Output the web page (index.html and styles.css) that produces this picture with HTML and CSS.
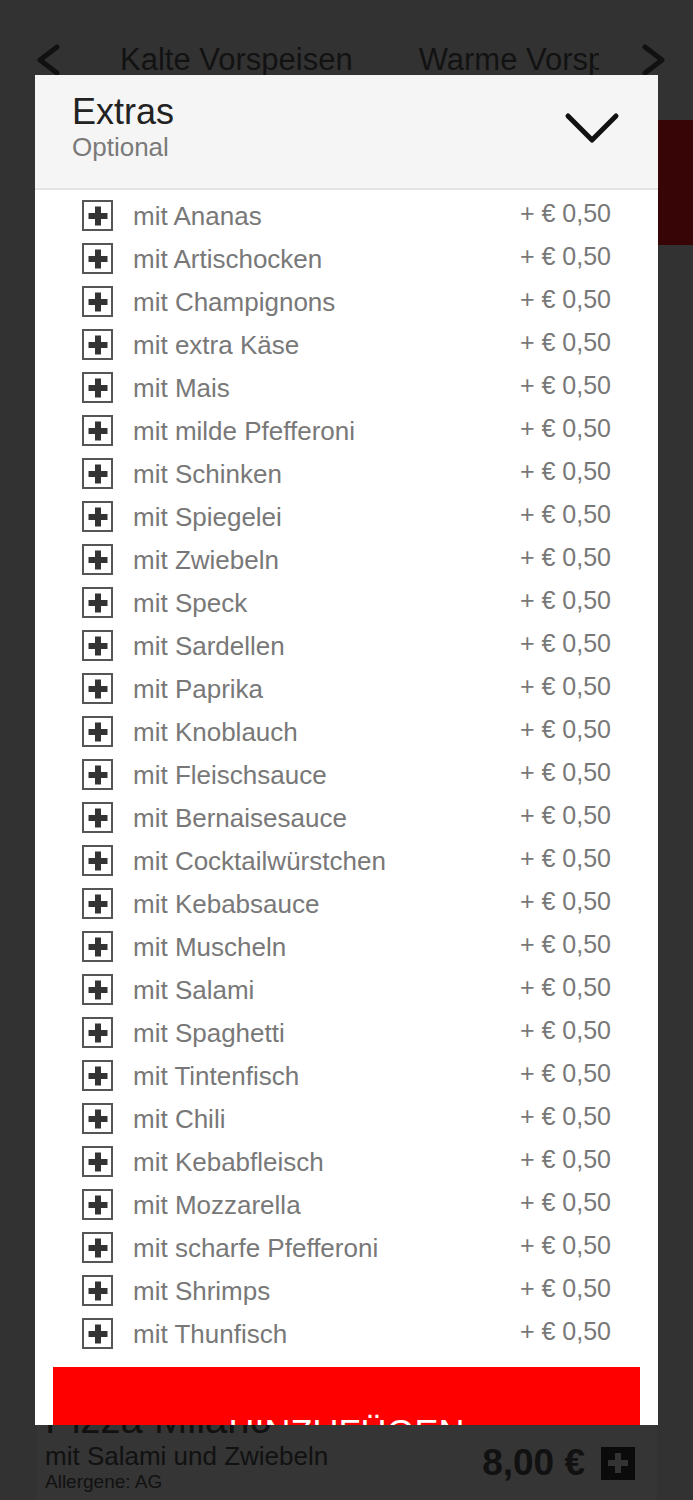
FILE: index.html
```html
<!DOCTYPE html>
<html>
  <head>
    <title>Extras</title>
    <link rel="stylesheet" href="styles.css">
  </head>
  <body>
    <div class="page">
      <div class="nav">
        <svg class="nav-arrow" width="26" height="32" viewBox="0 0 26 32"><polyline points="22,3 5,16 22,29" fill="none" stroke="#111" stroke-width="5" stroke-linecap="round" stroke-linejoin="round"/></svg>
        <div class="nav-items">
          <span class="nav-item">Kalte Vorspeisen</span>
          <span class="nav-item">Warme Vorspeisen</span>
        </div>
        <svg class="nav-arrow" width="26" height="32" viewBox="0 0 26 32"><polyline points="4,3 21,16 4,29" fill="none" stroke="#111" stroke-width="5" stroke-linecap="round" stroke-linejoin="round"/></svg>
      </div>
      <div class="banner"></div>
      <div class="dish">
        <div class="dish-title">Pizza Milano</div>
        <div class="dish-row">
          <div>
            <div class="dish-desc">mit Salami und Zwiebeln</div>
            <div class="dish-allergens">Allergene: AG</div>
          </div>
          <div class="dish-buy">
            <span class="dish-price">8,00 €</span>
            <span class="dish-add"></span>
          </div>
        </div>
      </div>
    </div>

    <div class="modal">
      <div class="modal-head">
        <div>
          <div class="modal-title">Extras</div>
          <div class="modal-sub">Optional</div>
        </div>
        <svg class="chevron" width="56" height="34" viewBox="0 0 56 34"><polyline points="4,4 28,28 52,4" fill="none" stroke="#111" stroke-width="5" stroke-linecap="round" stroke-linejoin="round"/></svg>
      </div>
      <div class="extras">
        <div class="extra"><span class="check"></span><span class="name">mit Ananas</span><span class="price">+ € 0,50</span></div>
        <div class="extra"><span class="check"></span><span class="name">mit Artischocken</span><span class="price">+ € 0,50</span></div>
        <div class="extra"><span class="check"></span><span class="name">mit Champignons</span><span class="price">+ € 0,50</span></div>
        <div class="extra"><span class="check"></span><span class="name">mit extra Käse</span><span class="price">+ € 0,50</span></div>
        <div class="extra"><span class="check"></span><span class="name">mit Mais</span><span class="price">+ € 0,50</span></div>
        <div class="extra"><span class="check"></span><span class="name">mit milde Pfefferoni</span><span class="price">+ € 0,50</span></div>
        <div class="extra"><span class="check"></span><span class="name">mit Schinken</span><span class="price">+ € 0,50</span></div>
        <div class="extra"><span class="check"></span><span class="name">mit Spiegelei</span><span class="price">+ € 0,50</span></div>
        <div class="extra"><span class="check"></span><span class="name">mit Zwiebeln</span><span class="price">+ € 0,50</span></div>
        <div class="extra"><span class="check"></span><span class="name">mit Speck</span><span class="price">+ € 0,50</span></div>
        <div class="extra"><span class="check"></span><span class="name">mit Sardellen</span><span class="price">+ € 0,50</span></div>
        <div class="extra"><span class="check"></span><span class="name">mit Paprika</span><span class="price">+ € 0,50</span></div>
        <div class="extra"><span class="check"></span><span class="name">mit Knoblauch</span><span class="price">+ € 0,50</span></div>
        <div class="extra"><span class="check"></span><span class="name">mit Fleischsauce</span><span class="price">+ € 0,50</span></div>
        <div class="extra"><span class="check"></span><span class="name">mit Bernaisesauce</span><span class="price">+ € 0,50</span></div>
        <div class="extra"><span class="check"></span><span class="name">mit Cocktailwürstchen</span><span class="price">+ € 0,50</span></div>
        <div class="extra"><span class="check"></span><span class="name">mit Kebabsauce</span><span class="price">+ € 0,50</span></div>
        <div class="extra"><span class="check"></span><span class="name">mit Muscheln</span><span class="price">+ € 0,50</span></div>
        <div class="extra"><span class="check"></span><span class="name">mit Salami</span><span class="price">+ € 0,50</span></div>
        <div class="extra"><span class="check"></span><span class="name">mit Spaghetti</span><span class="price">+ € 0,50</span></div>
        <div class="extra"><span class="check"></span><span class="name">mit Tintenfisch</span><span class="price">+ € 0,50</span></div>
        <div class="extra"><span class="check"></span><span class="name">mit Chili</span><span class="price">+ € 0,50</span></div>
        <div class="extra"><span class="check"></span><span class="name">mit Kebabfleisch</span><span class="price">+ € 0,50</span></div>
        <div class="extra"><span class="check"></span><span class="name">mit Mozzarella</span><span class="price">+ € 0,50</span></div>
        <div class="extra"><span class="check"></span><span class="name">mit scharfe Pfefferoni</span><span class="price">+ € 0,50</span></div>
        <div class="extra"><span class="check"></span><span class="name">mit Shrimps</span><span class="price">+ € 0,50</span></div>
        <div class="extra"><span class="check"></span><span class="name">mit Thunfisch</span><span class="price">+ € 0,50</span></div>
      </div>
      <div class="add-button">HINZUFÜGEN</div>
    </div>
  </body>
</html>
```

FILE: styles.css
```css
html,
body {
  margin: 0;
  height: 1500px;
  overflow: hidden;
}
body {
  background-color: #323232;
  font-family: "Liberation Sans", Arial, sans-serif;
  position: relative;
}
.page {
  display: flex;
  flex-direction: column;
  height: 1500px;
}
.nav {
  display: flex;
  align-items: flex-start;
  height: 78px;
  padding: 42px 26px 0 35px;
}
.nav-arrow {
  flex: none;
  margin-top: 2px;
}
.nav-items {
  flex: 1;
  display: flex;
  gap: 32px;
  margin: 0 42px;
  overflow: hidden;
  white-space: nowrap;
}
.nav-item {
  padding: 0 17px;
  font-size: 31px;
  line-height: 36px;
  color: #121212;
}
.banner {
  height: 125px;
  margin-left: 40px;
  background-color: #370505;
}
.dish {
  margin: auto 36px 0 37px;
  height: 103px;
  padding: 0 22px 0 8px;
  background-color: #353535;
  color: #111;
}
.dish-title {
  font-size: 40px;
  line-height: 44px;
}
.dish-row {
  display: flex;
  justify-content: space-between;
  align-items: center;
}
.dish-desc {
  font-size: 26px;
  line-height: 30px;
}
.dish-allergens {
  font-size: 19px;
  line-height: 22px;
}
.dish-buy {
  display: flex;
  align-items: center;
  gap: 16px;
  margin-bottom: 8px;
}
.dish-price {
  font-size: 37px;
  font-weight: bold;
}
.dish-add {
  position: relative;
  width: 34px;
  height: 33px;
  background-color: #0b0b0b;
}
.dish-add::before,
.dish-add::after {
  content: "";
  position: absolute;
  background-color: #333;
  left: 50%;
  top: 50%;
  transform: translate(-50%, -50%);
}
.dish-add::before {
  width: 20px;
  height: 6px;
}
.dish-add::after {
  width: 6px;
  height: 20px;
}

.modal {
  position: absolute;
  top: 75px;
  left: 35px;
  width: 623px;
  height: 1350px;
  overflow: hidden;
  background-color: #fff;
}
.modal-head {
  display: flex;
  justify-content: space-between;
  align-items: center;
  padding: 16px 38px 26px 37px;
  background-color: #f5f5f5;
  border-bottom: 2px solid #e4e4e4;
}
.modal-title {
  font-size: 36px;
  line-height: 41px;
  color: #222;
}
.modal-sub {
  font-size: 26px;
  line-height: 30px;
  color: #7a7a7a;
}
.chevron {
  margin-top: 4px;
}
.extras {
  padding: 4px 47px 0 47px;
}
.extra {
  display: flex;
  align-items: center;
  height: 43px;
  color: #787878;
}
.check {
  position: relative;
  flex: none;
  width: 27px;
  height: 27px;
  border: 2px solid #555;
}
.check::before,
.check::after {
  content: "";
  position: absolute;
  background-color: #333;
  left: 50%;
  top: 50%;
  transform: translate(-50%, -50%);
}
.check::before {
  width: 19px;
  height: 6px;
}
.check::after {
  width: 6px;
  height: 19px;
}
.name {
  flex: 1;
  margin-left: 20px;
  font-size: 26px;
  line-height: 30px;
}
.price {
  font-size: 25px;
  line-height: 30px;
  padding-bottom: 5px;
}
.add-button {
  margin: 12px 18px 0;
  padding: 46px 0 43px;
  background-color: #ff0000;
  color: #fff;
  font-size: 36px;
  line-height: 41px;
  text-align: center;
}
```
